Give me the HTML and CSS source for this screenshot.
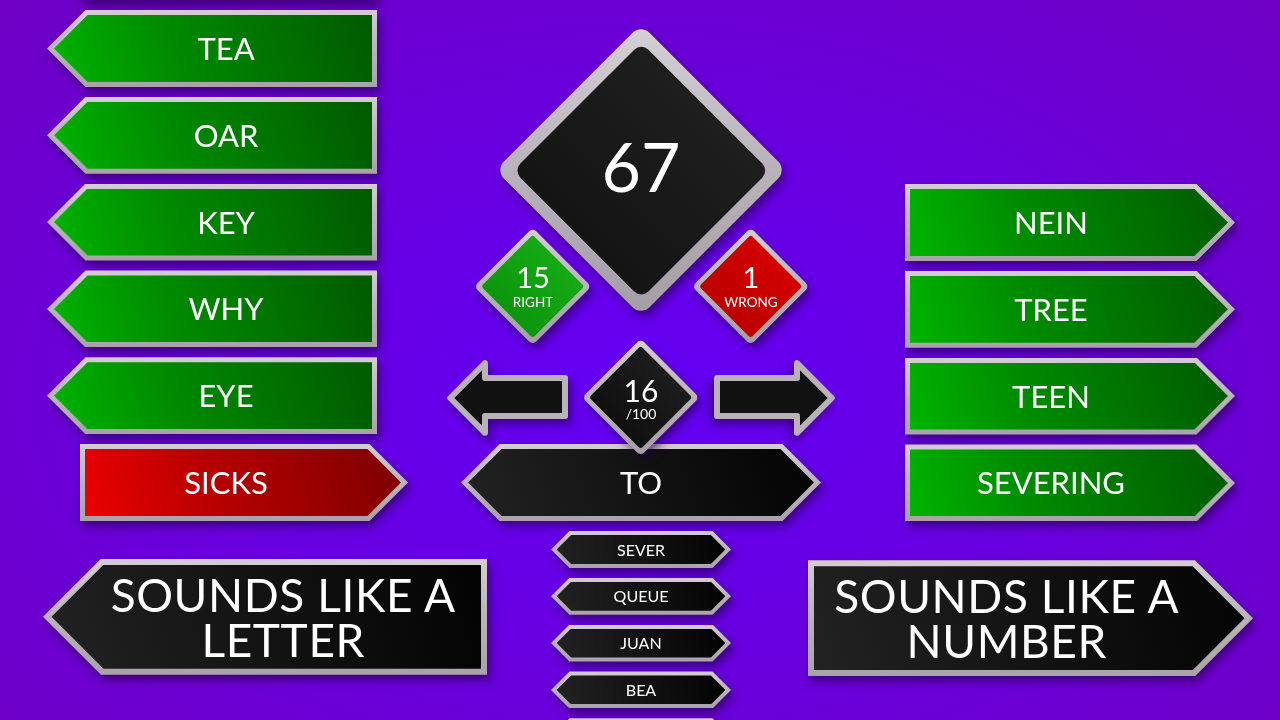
FILE: index.html
```html
<!DOCTYPE html>
<html lang="en">
<head>
<meta charset="utf-8">
<title>Sounds Like</title>
<link rel="stylesheet" href="styles.css">
</head>
<body>
<main class="board">
  <section class="col col-left">
    <div class="tile point-left green"><div class="frame"><div class="fill"></div></div></div>
    <div class="tile point-left green"><div class="frame"><div class="fill"><span>TEA</span></div></div></div>
    <div class="tile point-left green"><div class="frame"><div class="fill"><span>OAR</span></div></div></div>
    <div class="tile point-left green"><div class="frame"><div class="fill"><span>KEY</span></div></div></div>
    <div class="tile point-left green"><div class="frame"><div class="fill"><span>WHY</span></div></div></div>
    <div class="tile point-left green"><div class="frame"><div class="fill"><span>EYE</span></div></div></div>
    <div class="tile point-right red sicks"><div class="frame"><div class="fill"><span>SICKS</span></div></div></div>
    <div class="tile point-left black category cat-left"><div class="frame"><div class="fill"><span>SOUNDS LIKE A<br>LETTER</span></div></div></div>
  </section>

  <section class="col col-center">
    <div class="diamond big"><span class="score">67</span></div>
    <div class="tally-row">
      <div class="diamond sm d-green"><span class="num">15</span><span class="lbl">RIGHT</span></div>
      <div class="diamond sm d-red"><span class="num">1</span><span class="lbl">WRONG</span></div>
    </div>
    <div class="nav-row">
      <svg class="nav-arrow" width="122" height="84" viewBox="0 0 122 84"><polygon points="4.2,42 39,7.2 39,22 119,22 119,60 39,60 39,76.8"/></svg>
      <div class="diamond sm d-black"><span class="num count">16</span><span class="lbl total">/100</span></div>
      <svg class="nav-arrow flip" width="122" height="84" viewBox="0 0 122 84"><polygon points="4.2,42 39,7.2 39,22 119,22 119,60 39,60 39,76.8"/></svg>
    </div>
    <div class="tile hex black word"><div class="frame"><div class="fill"><span>TO</span></div></div></div>
    <div class="queue">
      <div class="tile hex black mini"><div class="frame"><div class="fill"><span>SEVER</span></div></div></div>
      <div class="tile hex black mini"><div class="frame"><div class="fill"><span>QUEUE</span></div></div></div>
      <div class="tile hex black mini"><div class="frame"><div class="fill"><span>JUAN</span></div></div></div>
      <div class="tile hex black mini"><div class="frame"><div class="fill"><span>BEA</span></div></div></div>
      <div class="tile hex black mini"><div class="frame"><div class="fill"></div></div></div>
    </div>
  </section>

  <section class="col col-right">
    <div class="tile point-right green"><div class="frame"><div class="fill"><span>NEIN</span></div></div></div>
    <div class="tile point-right green"><div class="frame"><div class="fill"><span>TREE</span></div></div></div>
    <div class="tile point-right green"><div class="frame"><div class="fill"><span>TEEN</span></div></div></div>
    <div class="tile point-right green"><div class="frame"><div class="fill"><span>SEVERING</span></div></div></div>
    <div class="tile point-right black category cat-right"><div class="frame"><div class="fill"><span>SOUNDS LIKE A<br>NUMBER</span></div></div></div>
  </section>
</main>
</body>
</html>
```

FILE: styles.css
```css
html, body {
  margin: 0;
  padding: 0;
}

body {
  width: 1280px;
  height: 720px;
  overflow: hidden;
  font-family: Lato, "Liberation Sans", sans-serif;
  color: #fff;
  background: radial-gradient(ellipse 72% 78% at 50% 55%, #6400f4 0%, #6800e2 42%, #7000c4 100%);
}

.board {
  display: grid;
  grid-template-columns: 403px 390px 1fr;
  padding-left: 43px;
  height: 720px;
  overflow: hidden;
}

.col {
  display: flex;
  flex-direction: column;
  align-items: flex-start;
  gap: 9.8px;
}

.col-left {
  margin-top: -76.8px;
}

.col-right {
  padding-top: 184px;
}

/* ---------- tiles ---------- */
.tile {
  --h: 77px;
  --b: 5px;
  --fs: 31px;
  width: 330px;
  height: var(--h);
  flex: none;
  filter: drop-shadow(3px 5px 5px rgba(28, 0, 62, 0.6));
}

.frame {
  height: 100%;
  box-sizing: border-box;
  padding: var(--b);
  background: linear-gradient(180deg, #d4cdd4 0%, #bdb5bd 45%, #aaa2aa 100%);
}

.fill {
  height: 100%;
  box-sizing: border-box;
  display: flex;
  align-items: center;
  justify-content: center;
  text-align: center;
  font-size: var(--fs);
  line-height: 1;
  white-space: nowrap;
}

.point-left .frame {
  padding-left: calc(var(--b) * 1.414);
  clip-path: polygon(calc(var(--h) / 2) 0, 100% 0, 100% 100%, calc(var(--h) / 2) 100%, 0 50%);
}
.point-left .fill {
  clip-path: polygon(calc(var(--h) / 2 - var(--b)) 0, 100% 0, 100% 100%, calc(var(--h) / 2 - var(--b)) 100%, 0 50%);
  padding-left: 26px;
}

.point-right .frame {
  padding-right: calc(var(--b) * 1.414);
  clip-path: polygon(0 0, calc(100% - var(--h) / 2) 0, 100% 50%, calc(100% - var(--h) / 2) 100%, 0 100%);
}
.point-right .fill {
  clip-path: polygon(0 0, calc(100% - var(--h) / 2 + var(--b)) 0, 100% 50%, calc(100% - var(--h) / 2 + var(--b)) 100%, 0 100%);
  padding-right: 36px;
}

.hex .frame {
  padding-left: calc(var(--b) * 1.414);
  padding-right: calc(var(--b) * 1.414);
  clip-path: polygon(calc(var(--h) / 2) 0, calc(100% - var(--h) / 2) 0, 100% 50%, calc(100% - var(--h) / 2) 100%, calc(var(--h) / 2) 100%, 0 50%);
}
.hex .fill {
  clip-path: polygon(calc(var(--h) / 2 - var(--b)) 0, calc(100% - var(--h) / 2 + var(--b)) 0, 100% 50%, calc(100% - var(--h) / 2 + var(--b)) 100%, calc(var(--h) / 2 - var(--b)) 100%, 0 50%);
}

.green .fill {
  background: linear-gradient(72deg, #00b400 0%, #008a00 38%, #005a00 100%);
}
.red .fill {
  background: linear-gradient(72deg, #ec0000 0%, #b80000 40%, #7c0000 100%);
}
.black .fill {
  background: linear-gradient(72deg, #222 0%, #141414 45%, #030303 100%);
}

.col-left .point-left {
  margin-left: 4px;
}

.col-right .point-right {
  margin-left: 69px;
}

.sicks {
  width: 328px;
  margin-left: 37px;
}
.sicks .fill {
  padding-right: 34px;
}

.category {
  --h: 116px;
  --b: 6px;
  --fs: 46px;
  width: 444px;
}
.category .fill {
  line-height: 45px;
  letter-spacing: 0.6px;
}

.cat-left {
  margin-top: 28px;
}
.col-left .cat-left {
  margin-left: 0;
}
.cat-left .fill {
  padding-left: 34px;
}

.col-right .cat-right {
  width: 445px;
  margin-top: 29px;
  margin-left: -28px;
}
.cat-right .fill {
  padding-right: 45px;
}

/* ---------- center column ---------- */
.col-center {
  align-items: center;
  gap: 0;
}

.diamond {
  --inset: 15.3px;
  --ring: 5px;
  --radius: 5px;
  --fill: #111;
  position: relative;
  flex: none;
  width: 114px;
  height: 114px;
  display: flex;
  flex-direction: column;
  align-items: center;
  justify-content: center;
  filter: drop-shadow(3px 5px 5px rgba(28, 0, 62, 0.6));
}
.diamond::before,
.diamond::after {
  content: "";
  position: absolute;
  transform: rotate(45deg);
}
.diamond::before {
  inset: var(--inset);
  border-radius: var(--radius);
  background: linear-gradient(135deg, #d6cfd6 0%, #bab2ba 50%, #a59da5 100%);
}
.diamond::after {
  inset: calc(var(--inset) + var(--ring));
  border-radius: calc(var(--radius) - 2px);
  background: var(--fill);
}
.diamond > span {
  position: relative;
  z-index: 1;
  line-height: 1;
}

.diamond.big {
  --inset: 37px;
  --ring: 12.7px;
  --radius: 12px;
  --fill: linear-gradient(180deg, #1e1e1e, #141414);
  width: 280px;
  height: 280px;
  margin-top: 30px;
}
.score {
  font-size: 68px;
  margin-bottom: 9px;
}

.tally-row {
  width: 100%;
  box-sizing: border-box;
  padding: 0 28px 0 30px;
  display: flex;
  justify-content: space-between;
  margin-top: -80px;
}

.d-green {
  --fill: linear-gradient(180deg, #14aa14, #0c960c);
}
.d-red {
  --fill: linear-gradient(180deg, #d20000, #bc0000);
}
.d-black {
  --fill: linear-gradient(180deg, #1c1c1c, #101010);
}

.num {
  font-size: 29px;
}
.lbl {
  font-size: 13.5px;
  margin-top: 4.5px;
}
.d-green, .d-red {
  padding-bottom: 3px;
  box-sizing: border-box;
}

.num.count {
  font-size: 30px;
}
.lbl.total {
  font-size: 14px;
  margin-top: 2.7px;
}

.nav-row {
  width: 100%;
  display: flex;
  justify-content: space-between;
  align-items: center;
  margin-top: -3px;
  z-index: 2;
}

.nav-arrow {
  display: block;
  flex: none;
  filter: drop-shadow(3px 5px 5px rgba(28, 0, 62, 0.6));
}
.nav-arrow polygon {
  fill: #111;
  stroke: #bab2ba;
  stroke-width: 6;
  stroke-linejoin: round;
}
.nav-arrow.flip {
  transform: scaleX(-1);
}

.word {
  width: 360px;
  margin-top: -11px;
}

.queue {
  margin-top: 10px;
  display: flex;
  flex-direction: column;
  align-items: center;
  gap: 9.8px;
}

.mini {
  --h: 37px;
  --b: 4px;
  --fs: 16px;
  width: 180px;
}
```
